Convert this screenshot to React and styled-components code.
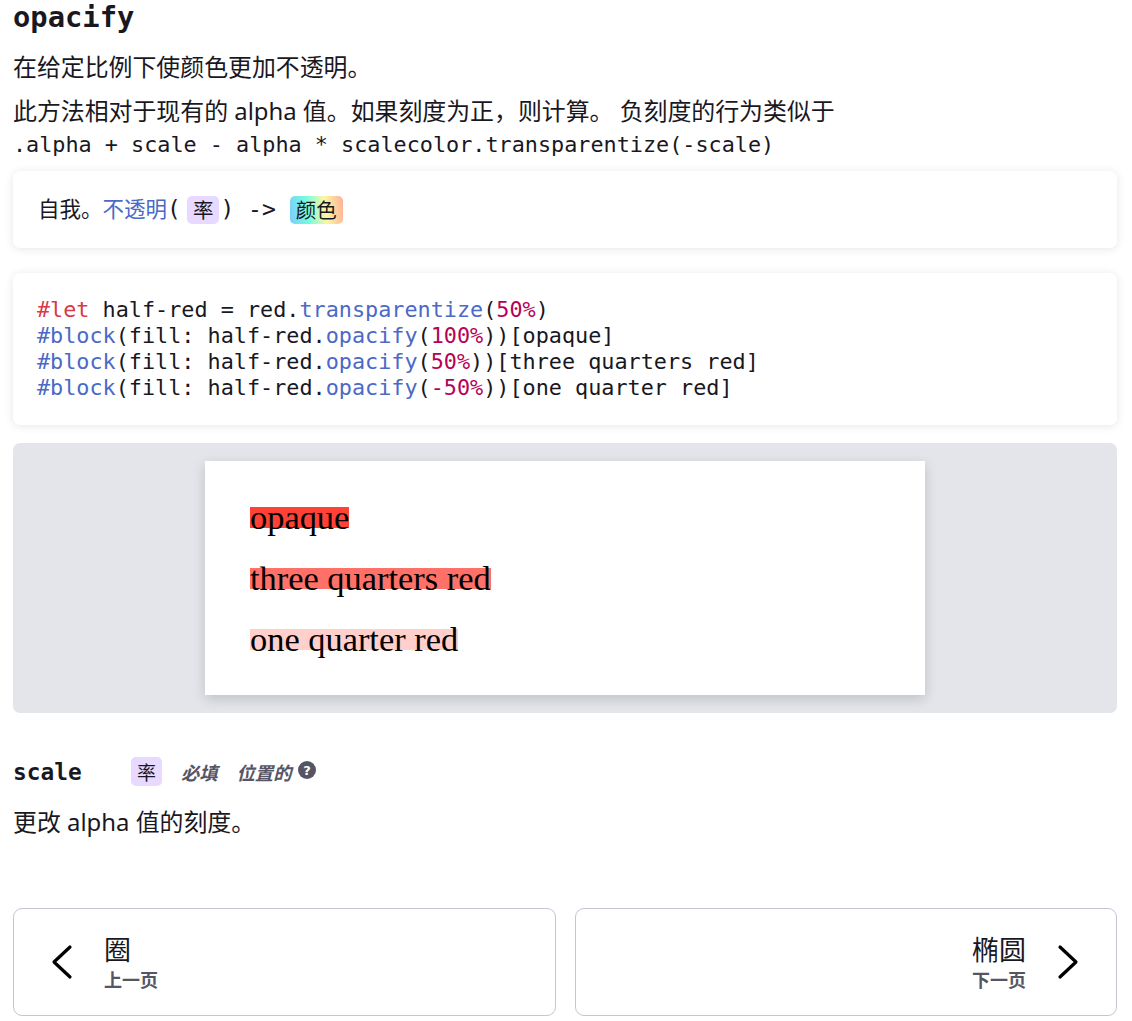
import React from 'react';
import styled, { createGlobalStyle } from 'styled-components';

const GlobalStyle = createGlobalStyle`
  html, body {
    margin: 0;
    padding: 0;
    background: #ffffff;
  }
  body {
    font-family: "Noto Sans", "Noto Sans CJK SC", sans-serif;
    color: #19181f;
  }
`;

const mono = `"DejaVu Sans Mono", "Noto Sans CJK SC", monospace`;

const Page = styled.main`
  padding: 0 15px 0 13px;
`;

const Title = styled.h1`
  margin: 0;
  font-family: ${mono};
  font-size: 28.8px;
  line-height: 34px;
  font-weight: 700;
`;

const Para = styled.p`
  margin: ${(p) => p.$mt || 0}px 0 0;
  font-size: 23.9px;
  line-height: 32px;
`;

const InlineCode = styled.code`
  font-family: ${mono};
  font-size: 21.8px;
  line-height: 1;
`;

const Card = styled.div`
  margin-top: ${(p) => p.$mt}px;
  background: #ffffff;
  border-radius: 7px;
  box-shadow: 0 1px 10px rgba(0, 0, 0, 0.1);
  padding: ${(p) => p.$pad};
`;

const Signature = styled.div`
  font-family: ${mono};
  font-size: 23px;
  line-height: 29px;
  display: flex;
  align-items: center;
`;

const Tok = styled.span`
  color: ${(p) => p.$c || '#19181f'};
  font-size: ${(p) => (p.$fs ? `${p.$fs}px` : 'inherit')};
  white-space: pre;
`;

const TypeChip = styled.span`
  display: inline-flex;
  align-items: center;
  justify-content: center;
  height: ${(p) => p.$h || 28}px;
  padding: 0 6px;
  margin: ${(p) => p.$m || '0'};
  border-radius: 5px;
  font-family: "Noto Sans CJK SC", sans-serif;
  font-size: ${(p) => p.$fs || 20.5}px;
  color: #19181f;
  background: ${(p) =>
    p.$kind === 'color'
      ? 'linear-gradient(83deg, #7dcdfc 0%, #72fce2 33%, #fcf7a2 66%, #ffaf98 100%)'
      : '#e7d9ff'};
`;

const Code = styled.pre`
  margin: 0;
  font-family: ${mono};
  font-size: 21.8px;
  line-height: 26px;
`;

const Preview = styled.div`
  margin-top: 18px;
  background: #e4e5ea;
  border-radius: 7px;
  padding: 18px 0;
  display: flex;
  justify-content: center;
`;

const Sheet = styled.div`
  width: 720px;
  background: #ffffff;
  box-shadow: 0 4px 12px rgba(0, 0, 0, 0.16);
  padding: 26px 45px 25px;
  box-sizing: border-box;
  font-family: "Liberation Serif", serif;
  font-size: 34.4px;
`;

const Row = styled.div`
  line-height: 61px;
  height: 61px;
  color: #000;
`;

const Mark = styled.span`
  background-image: linear-gradient(
    to bottom,
    transparent 9px,
    ${(p) => p.$c} 9px,
    ${(p) => p.$c} 30px,
    transparent 30px
  );
`;

const ParamHead = styled.div`
  margin-top: 44px;
  display: flex;
  align-items: center;
  height: 29px;
`;

const ParamName = styled.span`
  font-family: ${mono};
  font-weight: 700;
  font-size: 22.8px;
  width: 118px;
`;

const Flag = styled.span`
  font-family: "Noto Sans CJK SC", sans-serif;
  font-weight: 700;
  font-style: italic;
  font-size: 18.3px;
  color: #565565;
  margin-left: ${(p) => p.$ml}px;
`;

const Help = styled.svg`
  margin-left: 7px;
  margin-top: -4px;
`;

const Nav = styled.nav`
  margin-top: 70px;
  display: grid;
  grid-template-columns: 1fr 1fr;
  gap: 19px;
`;

const NavLink = styled.a`
  height: 108px;
  box-sizing: border-box;
  border: 1px solid #c6c5d5;
  border-radius: 9px;
  display: flex;
  align-items: center;
  justify-content: ${(p) => (p.$next ? 'flex-end' : 'flex-start')};
  gap: 30px;
  padding: 0 36px;
  color: #19181f;
  text-decoration: none;
`;

const NavText = styled.div`
  display: flex;
  flex-direction: column;
  align-items: flex-start;
`;

const NavTitle = styled.span`
  font-family: "Noto Sans CJK SC", sans-serif;
  font-size: 27px;
  line-height: 28px;
`;

const NavHint = styled.span`
  margin-top: 6px;
  font-family: "Noto Sans CJK SC", sans-serif;
  font-size: 18px;
  line-height: 20px;
  font-weight: 700;
  color: #565565;
`;

const Chevron = ({ dir }) => (
  <svg width="24" height="36" viewBox="0 0 24 36" fill="none">
    <path
      d={dir === 'left' ? 'M20 3 L4 18 L20 33' : 'M4 3 L20 18 L4 33'}
      stroke="#000"
      strokeWidth="3.2"
      strokeLinecap="round"
      strokeLinejoin="round"
    />
  </svg>
);

const K = '#d73a49';
const F = '#4b69c6';
const N = '#b60157';

const App = () => (
  <>
    <GlobalStyle />
    <Page>
      <Title>opacify</Title>
      <Para $mt={17}>在给定比例下使颜色更加不透明。</Para>
      <Para $mt={12}>
        此方法相对于现有的 alpha 值。如果刻度为正，则计算。 负刻度的行为类似于
        <br />
        <InlineCode>.alpha + scale - alpha * scalecolor.transparentize(-scale)</InlineCode>
      </Para>

      <Card $mt={12} $pad="24px 25px">
        <Signature>
          <Tok $fs={21.5}>自我。</Tok>
          <Tok $fs={21.5} $c={F}>不透明</Tok>
          <Tok>(</Tok>
          <TypeChip $m="0 1px 0 6px">率</TypeChip>
          <Tok>) -&gt; </Tok>
          <TypeChip $kind="color">颜色</TypeChip>
        </Signature>
      </Card>

      <Card $mt={25} $pad="24px 24px">
        <Code>
          <Tok $c={K}>#let</Tok> half-red = red.<Tok $c={F}>transparentize</Tok>(<Tok $c={N}>50%</Tok>)
          {'\n'}
          <Tok $c={F}>#block</Tok>(fill: half-red.<Tok $c={F}>opacify</Tok>(<Tok $c={N}>100%</Tok>))[opaque]
          {'\n'}
          <Tok $c={F}>#block</Tok>(fill: half-red.<Tok $c={F}>opacify</Tok>(<Tok $c={N}>50%</Tok>))[three quarters red]
          {'\n'}
          <Tok $c={F}>#block</Tok>(fill: half-red.<Tok $c={F}>opacify</Tok>(<Tok $c={N}>-50%</Tok>))[one quarter red]
        </Code>
      </Card>

      <Preview>
        <Sheet>
          <Row>
            <Mark $c="#ff4136">opaque</Mark>
          </Row>
          <Row>
            <Mark $c="rgba(255, 65, 54, 0.75)">three quarters red</Mark>
          </Row>
          <Row>
            <Mark $c="rgba(255, 65, 54, 0.25)">one quarter red</Mark>
          </Row>
        </Sheet>
      </Preview>

      <ParamHead>
        <ParamName>scale</ParamName>
        <TypeChip $h={29} $fs={19}>率</TypeChip>
        <Flag $ml={19}>必填</Flag>
        <Flag $ml={19}>位置的</Flag>
        <Help width="18" height="18" viewBox="0 0 18 18">
          <circle cx="9" cy="9" r="9" fill="#565565" />
          <text
            x="9"
            y="14"
            textAnchor="middle"
            fontFamily="DejaVu Sans, sans-serif"
            fontWeight="700"
            fontSize="13"
            fill="#fff"
          >
            ?
          </text>
        </Help>
      </ParamHead>
      <Para $mt={20}>更改 alpha 值的刻度。</Para>

      <Nav>
        <NavLink href="#">
          <Chevron dir="left" />
          <NavText>
            <NavTitle>圈</NavTitle>
            <NavHint>上一页</NavHint>
          </NavText>
        </NavLink>
        <NavLink href="#" $next>
          <NavText>
            <NavTitle>椭圆</NavTitle>
            <NavHint>下一页</NavHint>
          </NavText>
          <Chevron dir="right" />
        </NavLink>
      </Nav>
    </Page>
  </>
);

export default App;
